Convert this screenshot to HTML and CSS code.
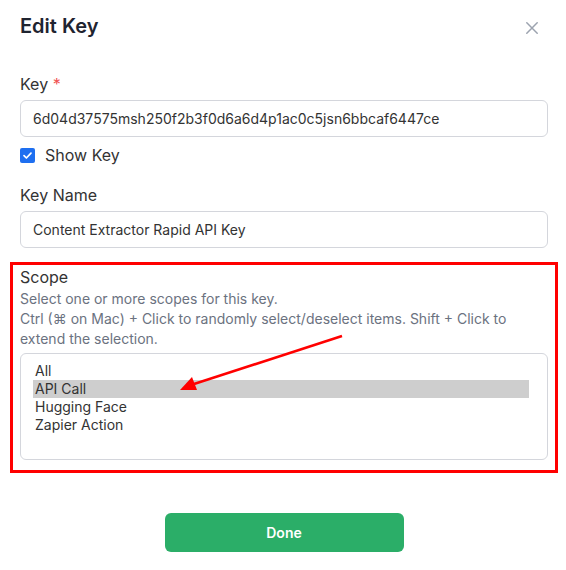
FILE: index.html
```html
<!DOCTYPE html>
<html lang="en">
<head>
  <meta charset="UTF-8" />
  <meta name="viewport" content="width=device-width, initial-scale=1.0" />
  <title>Edit Key</title>
  <link rel="stylesheet" href="styles.css">
</head>
<body>
  <div class="modal">
    <div class="modal-header">
      <h2>Edit Key</h2>
      <button class="close" aria-label="Close">
        <svg width="12" height="12" viewBox="0 0 12 12"><path d="M0.8 0.8L11.2 11.2M11.2 0.8L0.8 11.2" stroke="#9ca3af" stroke-width="1.5" fill="none" stroke-linecap="round"/></svg>
      </button>
    </div>

    <label class="field-label" for="key">Key <span class="req">*</span></label>
    <input class="text-input" id="key" type="text" value="6d04d37575msh250f2b3f0d6a6d4p1ac0c5jsn6bbcaf6447ce" />

    <label class="check-row">
      <input type="checkbox" checked />
      <span>Show Key</span>
    </label>

    <label class="field-label spaced" for="key-name">Key Name</label>
    <input class="text-input" id="key-name" type="text" value="Content Extractor Rapid API Key" />

    <div class="scope">
      <div class="field-label">Scope</div>
      <p class="help">Select one or more scopes for this key.<br>Ctrl (⌘ on Mac) + Click to randomly select/deselect items. Shift + Click to extend the selection.</p>
      <div class="listbox" role="listbox" aria-multiselectable="true">
        <div class="option" role="option">All</div>
        <div class="option selected" role="option" aria-selected="true">API Call</div>
        <div class="option" role="option">Hugging Face</div>
        <div class="option" role="option">Zapier Action</div>
      </div>
    </div>

    <div class="footer">
      <button class="done">Done</button>
    </div>
  </div>

  <svg class="arrow" width="566" height="570" viewBox="0 0 566 570">
    <line x1="342" y1="336" x2="194" y2="384" stroke="#f00" stroke-width="2.6" />
    <polygon points="180,390 192,377 197,390" fill="#f00" />
  </svg>
</body>
</html>
```

FILE: styles.css
```css
body {
  margin: 0;
  background: #fff;
  font-family: Inter, "Noto Sans", sans-serif;
  color: #333;
}

.modal {
  padding: 12px 18px 0 20px;
  display: flex;
  flex-direction: column;
}

.modal-header {
  display: flex;
  align-items: center;
  justify-content: space-between;
  height: 28px;
  margin-bottom: 32px;
}

.modal-header h2 {
  margin: 0;
  font-size: 20px;
  line-height: 28px;
  font-weight: 600;
  color: #1f2430;
}

.close {
  border: none;
  background: none;
  padding: 0;
  margin: 4px 10px 0 0;
  width: 12px;
  height: 12px;
  display: flex;
  cursor: pointer;
}

.field-label {
  font-size: 16px;
  line-height: 24px;
  color: #333;
  margin-bottom: 4px;
}

.field-label.spaced {
  margin-top: 16px;
}

.req {
  color: #f05252;
}

.text-input {
  height: 37px;
  box-sizing: border-box;
  border: 1px solid #d4d6dc;
  border-radius: 6px;
  padding: 0 12px;
  font-family: inherit;
  font-size: 14px;
  color: #333;
  outline: none;
}

.check-row {
  display: flex;
  align-items: center;
  gap: 10px;
  margin-top: 6px;
  font-size: 16px;
  line-height: 24px;
}

.check-row input {
  appearance: none;
  margin: 0;
  width: 15px;
  height: 15px;
  border-radius: 2px;
  background: #1e6ff0 url("data:image/svg+xml,%3Csvg xmlns='http://www.w3.org/2000/svg' viewBox='0 0 15 15'%3E%3Cpath d='M4 7.6L6.4 10L11 5.2' stroke='white' stroke-width='1.7' fill='none' stroke-linecap='round' stroke-linejoin='round'/%3E%3C/svg%3E") no-repeat center;
}

.scope {
  margin: 14px -10px 0 -10px;
  border: 3px solid #f00;
  padding: 0 7px 10px 7px;
}

.scope .field-label {
  margin-bottom: 0;
}

.help {
  margin: 0 0 4px;
  font-size: 14px;
  line-height: 20px;
  color: #6b7280;
}

.listbox {
  height: 107px;
  box-sizing: border-box;
  border: 1px solid #d4d6dc;
  border-radius: 6px;
  padding: 8px 18px 8px 12px;
}

.option {
  font-size: 14px;
  line-height: 18px;
  padding: 0 2px;
  color: #333;
}

.option.selected {
  background: #cecece;
}

.footer {
  display: flex;
  justify-content: center;
  margin-top: 40px;
}

.done {
  width: 239px;
  height: 39px;
  border: none;
  border-radius: 6px;
  background: #2bae68;
  color: #fff;
  font-family: inherit;
  font-size: 14px;
  font-weight: 600;
  cursor: pointer;
}

.arrow {
  position: absolute;
  left: 0;
  top: 0;
  pointer-events: none;
}
```
